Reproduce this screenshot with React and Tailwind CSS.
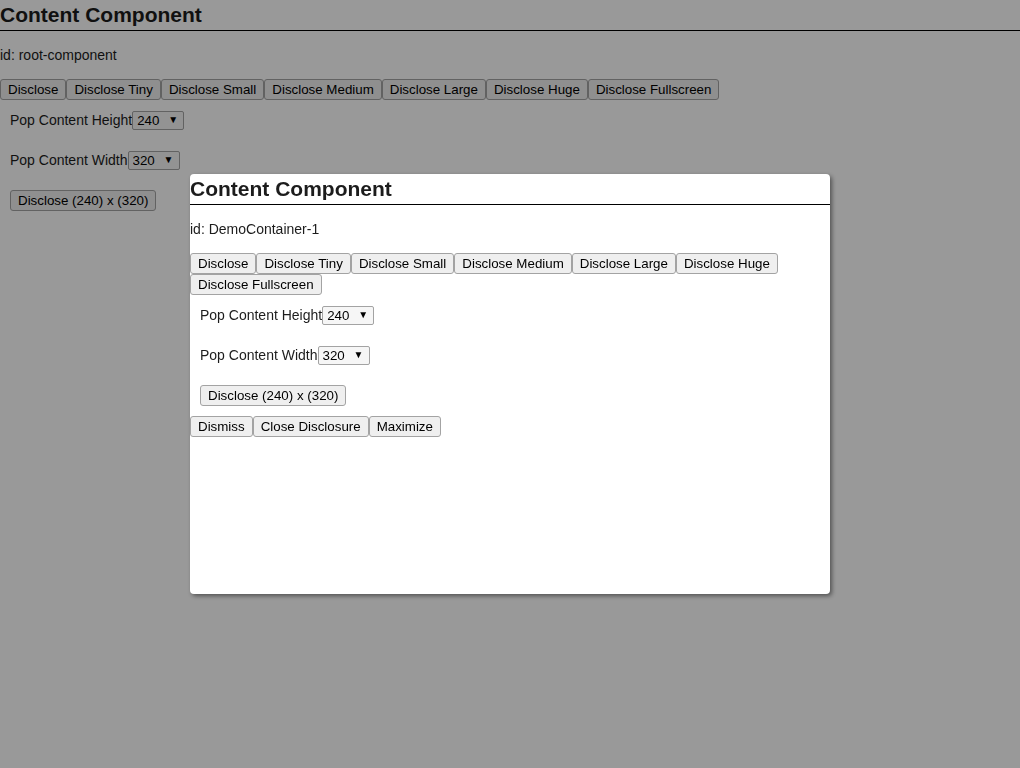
import React, { useState } from 'react';

const btn =
  'px-[7px] py-[2px] border border-[#a3a3a3] rounded-[3px] bg-[#efefef] text-[13.333px] leading-[15px] text-black whitespace-nowrap';

const DISCLOSE_BUTTONS = [
  'Disclose',
  'Disclose Tiny',
  'Disclose Small',
  'Disclose Medium',
  'Disclose Large',
  'Disclose Huge',
  'Disclose Fullscreen',
];

const SelectBox = ({ value, options, onChange }) => (
  <span className="relative inline-flex">
    <select
      value={value}
      onChange={(e) => onChange(e.target.value)}
      className="appearance-none w-[52px] h-[19px] pl-[4px] border border-[#a3a3a3] rounded-[2px] bg-[#f6f6f6] text-[13.333px] leading-[15px] text-black"
    >
      {options.map((o) => (
        <option key={o} value={o}>
          {o}
        </option>
      ))}
    </select>
    <span className="pointer-events-none absolute right-[6px] top-[3px] text-[10px] leading-[12px] text-black">▼</span>
  </span>
);

const ContentComponent = ({ id }) => {
  const [height, setHeight] = useState('240');
  const [width, setWidth] = useState('320');

  return (
    <div>
      <h2 className="text-[21px] font-bold leading-[30px] border-b border-black">Content Component</h2>
      <p className="my-4 text-[14px] leading-[16px]">id: {id}</p>
      <div className="flex flex-wrap">
        {DISCLOSE_BUTTONS.map((label) => (
          <button key={label} className={btn}>
            {label}
          </button>
        ))}
      </div>
      <div className="p-[10px] flex items-center h-[40px] text-[14px]">
        <span>Pop Content Height</span>
        <SelectBox value={height} options={['120', '240', '360', '480']} onChange={setHeight} />
      </div>
      <div className="p-[10px] flex items-center h-[40px] text-[14px]">
        <span>Pop Content Width</span>
        <SelectBox value={width} options={['160', '320', '480', '640']} onChange={setWidth} />
      </div>
      <div className="p-[10px] flex">
        <button className={btn}>
          Disclose ({height}) x ({width})
        </button>
      </div>
    </div>
  );
};

export default function App() {
  return (
    <div className="relative min-h-[768px] bg-white text-[#1c1c1c] font-['Liberation_Sans',Arial,sans-serif]">
      <ContentComponent id="root-component" />

      {/* overlay */}
      <div className="fixed inset-0 bg-black/40" />

      {/* disclosure modal */}
      <div className="absolute left-[190px] top-[174px] w-[640px] h-[420px] bg-white rounded-[4px] shadow-[2px_2px_4px_rgba(0,0,0,0.45)] overflow-hidden">
        <ContentComponent id="DemoContainer-1" />
        <div className="flex">
          <button className={btn}>Dismiss</button>
          <button className={btn}>Close Disclosure</button>
          <button className={btn}>Maximize</button>
        </div>
      </div>
    </div>
  );
}
